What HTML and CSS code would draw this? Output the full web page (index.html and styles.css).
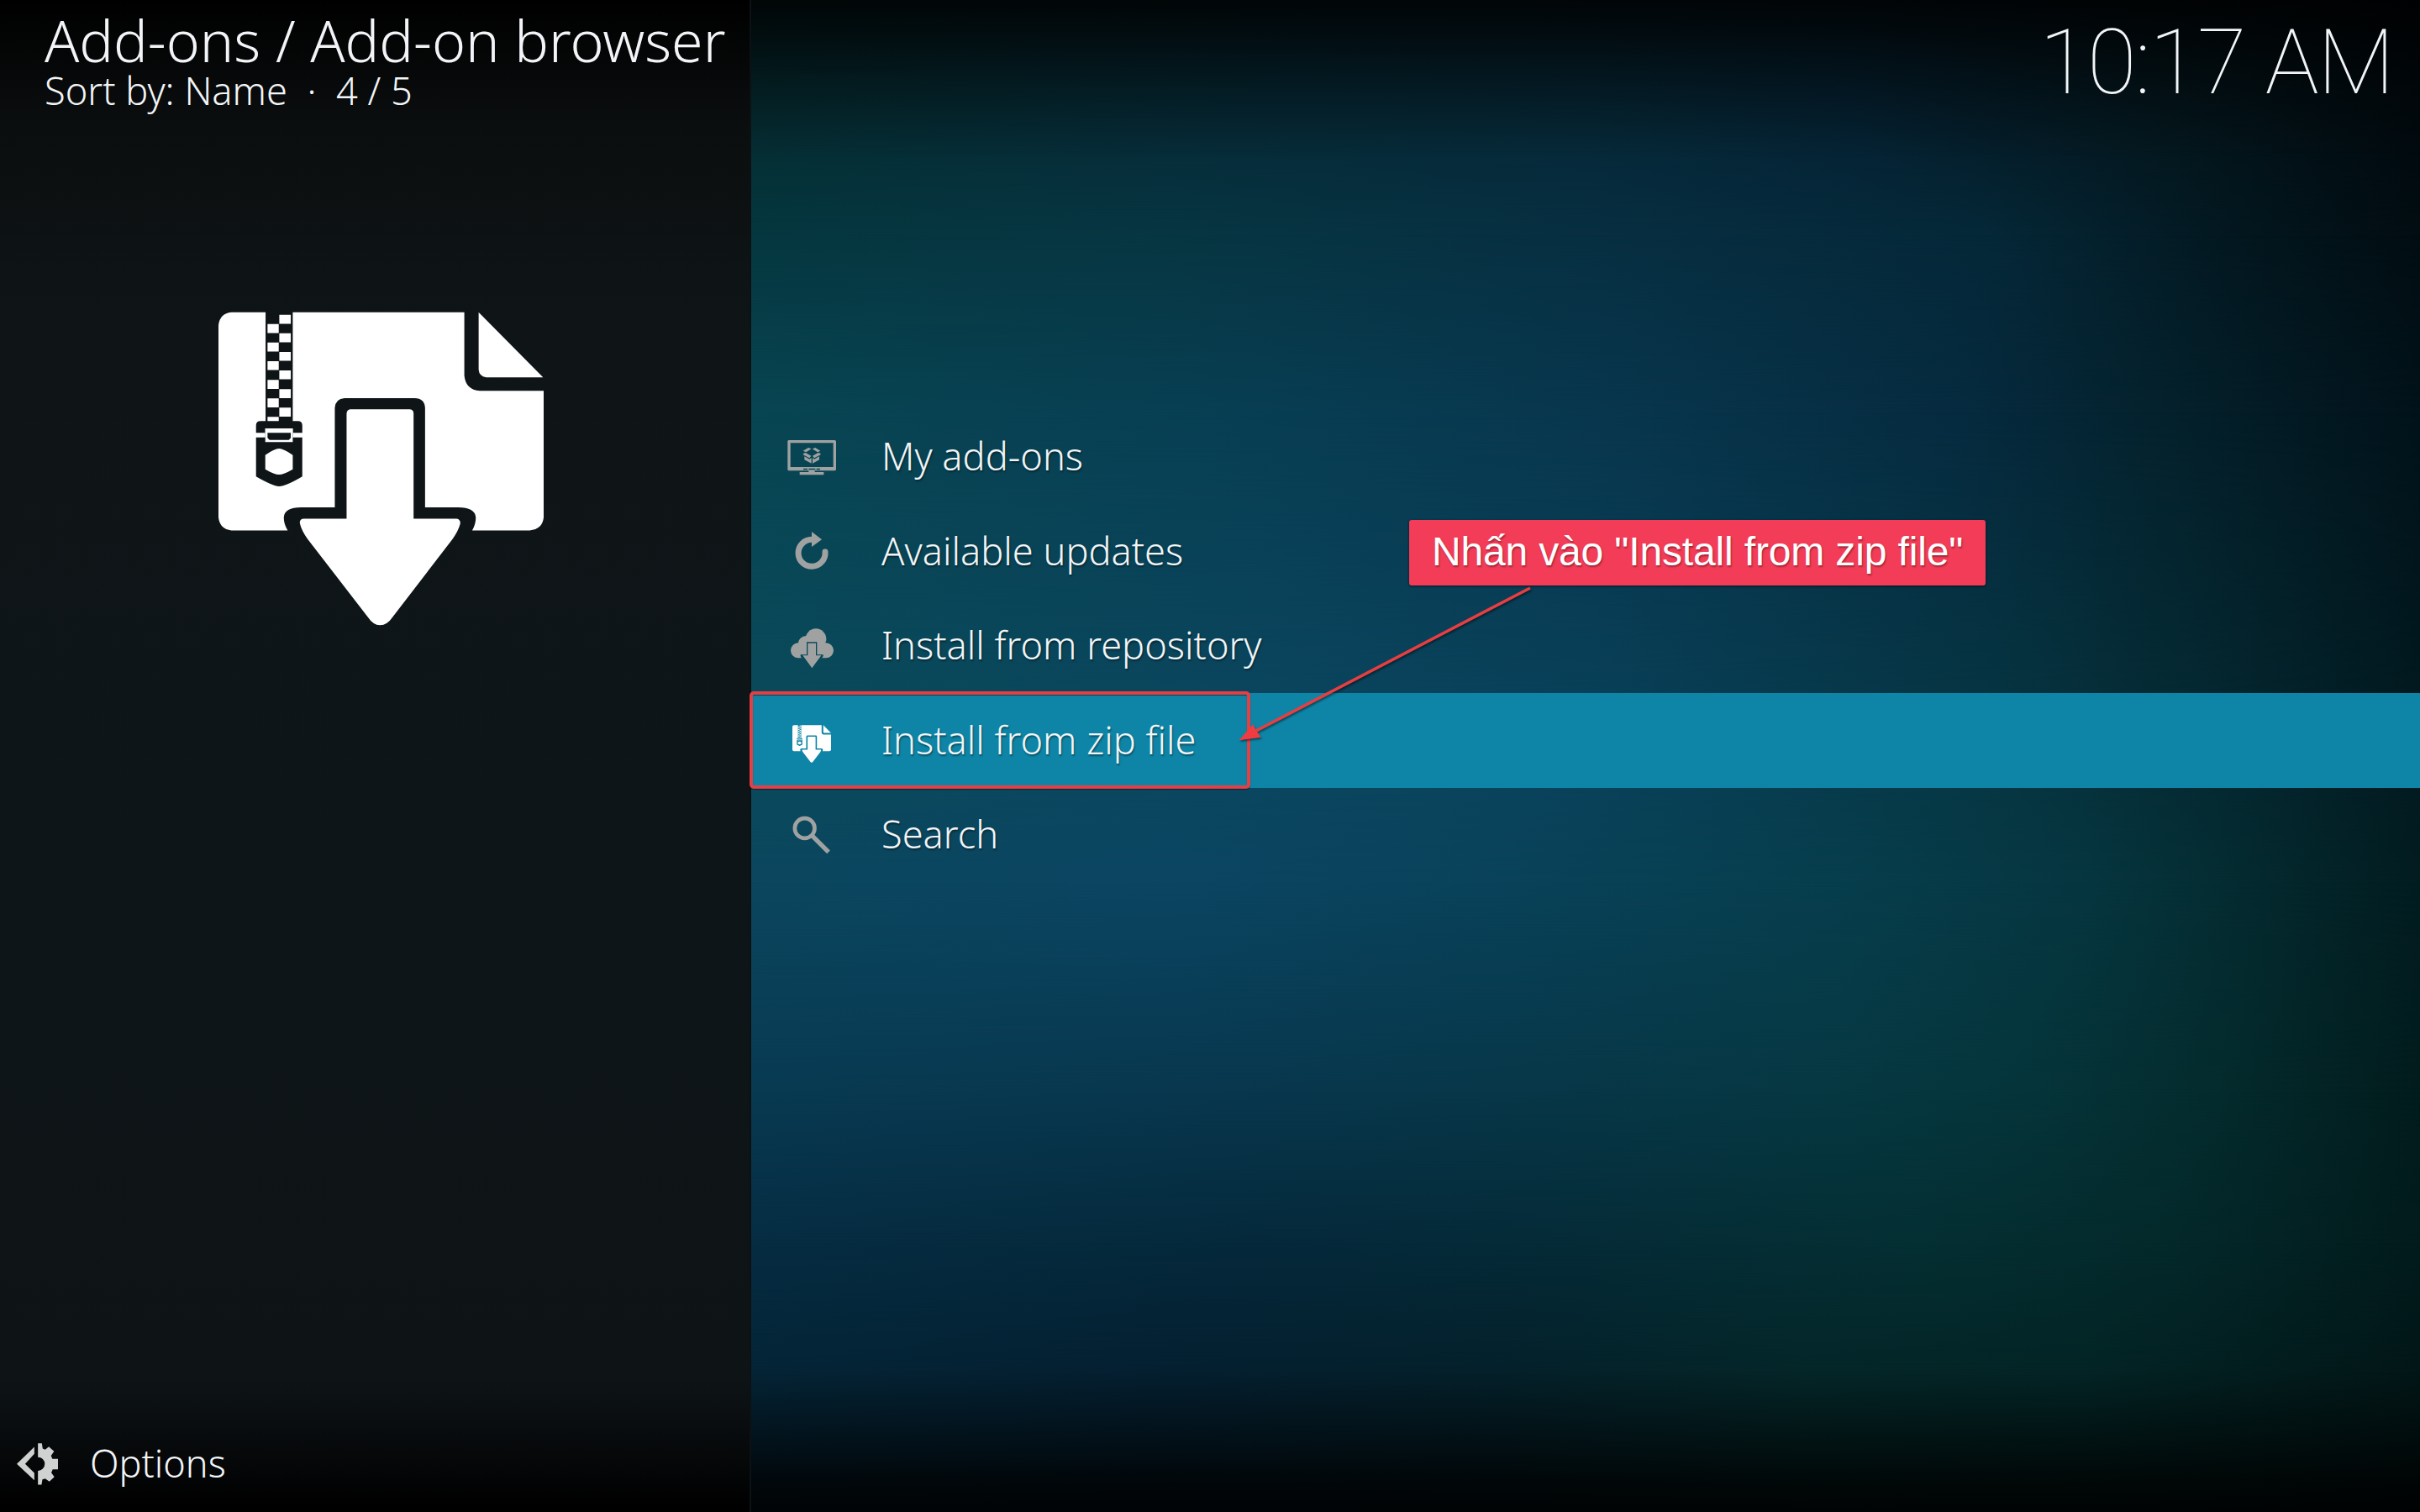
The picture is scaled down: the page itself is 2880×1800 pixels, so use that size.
FILE: index.html
```
<!DOCTYPE html>
<html lang="en">
<head>
    <meta charset="UTF-8">
    <meta name="viewport" content="width=device-width, initial-scale=1.0">
    <title>Add-on browser</title>
    <link rel="stylesheet" href="styles.css">
</head>
<body>
    <svg class="defs" width="0" height="0">
        <symbol id="zip-icon" viewBox="90 62 1160 1120">
            <path fill-rule="evenodd" d="M136 64H258V452H240Q224 452 224 468V494H257V478H355V494H389V468Q389 452 373 452H355V64H967V290Q972 340 1022 344H1250V796Q1246 838 1200 842H995Q1008 820 1008 796Q1005 760 945 760H827V405Q825 370 790 370H540Q507 372 505 405V760H385Q325 760 323 796Q323 820 337 842H136Q95 838 90 796V110Q95 68 136 64Z M224 510H257V494H355V510H389V650Q330 685 306 685Q285 685 224 650Z"/>
            <path fill-rule="evenodd" d="M257 478H355V527H257Z M272 485L265 492V512L272 519H341L348 512V492L341 485Z"/>
            <path d="M257 573Q290 550 306 550Q322 550 355 573V624Q322 643 306 643Q290 643 257 624Z"/>
            <path d="M265 106h40v32h-40zM265 172h40v32h-40zM265 238h40v32h-40zM265 305h40v32h-40zM265 371h40v32h-40zM265 437h40v15h-40zM307 73h41v32h-41zM307 139h41v32h-41zM307 205h41v32h-41zM307 271h41v32h-41zM307 338h41v32h-41zM307 404h41v32h-41z"/>
            <path d="M1018 64L1248 296H1045Q1020 292 1018 268Z"/>
            <path d="M547 800V425Q548 412 560 410H773Q786 412 786 425V800H940Q955 803 952 820Q945 845 925 873L712 1150Q692 1180 666 1180Q642 1180 622 1150L408 873Q385 840 380 815Q380 800 395 800Z"/>
        </symbol>
    </svg>

    <div class="screen">
        <div class="backdrop">
            <div class="band band-1"></div>
            <div class="band band-2"></div>
            <div class="band band-3"></div>
            <div class="band band-4"></div>
            <div class="band band-5"></div>
            <div class="band band-6"></div>
            <div class="band band-7"></div>
            <div class="band band-8"></div>
            <div class="band shade"></div>
        </div>

        <aside class="sidebar">
            <header class="heading">
                <h1>Add-ons / Add-on browser</h1>
                <p>Sort by: Name &nbsp;·&nbsp; 4 / 5</p>
            </header>
            <svg class="poster"><use href="#zip-icon"/></svg>
            <footer class="options">
                <svg class="options-icon" viewBox="62 84 148 150">
                    <path d="M125 97V122L92 158L125 191V217L62 158Z"/>
                    <path d="M138 84H152L155 103L164 107L177 96L196 113L185 129L190 140H210V178H191L186 190L197 205L179 222L164 211L154 214L151 233H138V183A24.500 24.500 0 0 0 138 134Z"/>
                </svg>
                <span>Options</span>
            </footer>
        </aside>

        <main class="content">
            <div class="clock">10:17 AM</div>
            <ul class="menu">
                <li class="item">
                    <svg class="icon" viewBox="-126 -126 252 252">
                        <path fill-rule="evenodd" d="M-83 -60H83L87 -57V46L83 49H11V54H43V64H-43V54H-11V49H-83L-86 46V-57ZM-76 -50V36H77V-50ZM-30 41V46H-15V41ZM-11 41V46H13V41ZM17 41V46H30V41Z"/>
                        <path d="M-31 -22L-12 -33L-1 -29L-20 -17ZM31 -22L13 -33L2 -29L21 -17ZM-29 -13L-22 -15L-2 -4L-8 4L-31 -8ZM31 -13L23 -15L3 -4L9 4L32 -8ZM-26 -2L-8 8L-1 3V23L-26 10ZM27 -2L9 8L3 3V23L27 10Z"/>
                    </svg>
                    <span>My add-ons</span>
                </li>
                <li class="item">
                    <svg class="icon" viewBox="-126 -126 252 252">
                        <path class="line" stroke-width="21" stroke-linecap="round" d="M48 3A48 48 0 1 1 0 -41"/>
                        <path d="M0 -69L36 -41L0 -15Z"/>
                    </svg>
                    <span>Available updates</span>
                </li>
                <li class="item">
                    <svg class="icon" viewBox="-126 -126 252 252">
                        <mask id="cloud-cut">
                            <rect x="-126" y="-126" width="252" height="252" fill="#fff"/>
                            <path fill="#000" d="M-18 -14H19V31H41V36L36 44H-36L-40 36V31H-18Z"/>
                        </mask>
                        <g mask="url(#cloud-cut)">
                            <circle cx="15" cy="-25" r="37"/>
                            <circle cx="-20" cy="-8" r="28"/>
                            <circle cx="-48" cy="16" r="27"/>
                            <circle cx="51" cy="16" r="27"/>
                            <path d="M-48 -5H50V43H-48Z"/>
                        </g>
                        <path d="M-14 -10H15V34H34L1 79L-32 34H-14Z"/>
                    </svg>
                    <span>Install from repository</span>
                </li>
                <li class="item focused">
                    <svg class="icon icon-zip"><use href="#zip-icon"/></svg>
                    <span>Install from zip file</span>
                </li>
                <li class="item">
                    <svg class="icon" viewBox="-126 -126 252 252">
                        <circle class="line" cx="-25" cy="-24" r="35.500" stroke-width="14"/>
                        <path class="line" stroke-width="16" d="M0 1L60 61"/>
                    </svg>
                    <span>Search</span>
                </li>
            </ul>
        </main>

        <!-- Annotation on top of the screen -->
        <div class="mark"></div>
        <svg class="arrow" viewBox="0 0 360 200">
            <path class="arrow-line" d="M350 9L22 180"/>
            <path class="arrow-head" d="M6 189L20 173L23 179L28 186Z"/>
        </svg>
        <div class="callout">Nhấn vào "Install from zip file"</div>
    </div>
</body>
</html>
```
FILE: styles.css
```
* {
    box-sizing: border-box;
}
body {
    margin: 0;
    background-color: #000;
    font-family: "Noto Sans", sans-serif;
    font-weight: 300;
    color: #f2f5f7;
}
h1, p, ul {
    margin: 0;
    padding: 0;
    font-weight: 300;
}
.defs {
    position: absolute;
}
.screen {
    position: relative;
    display: grid;
    grid-template-columns: 894px 1fr;
    width: 2880px;
    height: 1800px;
    overflow: hidden;
}

/* Backdrop: horizontal gradients faded into each other from top to bottom */
.backdrop, .band {
    position: absolute;
    inset: 0;
}
.backdrop {
    left: 894px;
}
.band-1 {
    background: linear-gradient(90deg, #052f35, #062d3a 25%, #062a3a 50%, #052436 66%, #04181f 85%, #010a0f);
}
.band-2 {
    background: linear-gradient(90deg, #05373f, #073642 25%, #072f42 50%, #052838 74%, #03161e 90%, #020d12);
    mask-image: linear-gradient(transparent 180px, #000 280px);
}
.band-3 {
    background: linear-gradient(90deg, #084552, #083e53 30%, #08364d 52%, #062b40 72%, #04212c 85%, #02121a);
    mask-image: linear-gradient(transparent 280px, #000 490px);
}
.band-4 {
    background: linear-gradient(90deg, #0a4b5c, #0b4760 30%, #09425b 50%, #063642 75%, #052b34 86%, #021a20);
    mask-image: linear-gradient(transparent 490px, #000 900px);
}
.band-5 {
    background: linear-gradient(90deg, #0b465e, #0b4562 25%, #09425a 45%, #073e4d 65%, #063640 80%, #042a2f 90%, #021c20);
    mask-image: linear-gradient(transparent 900px, #000 1050px);
}
.band-6 {
    background: linear-gradient(90deg, #083a52, #08374e 28%, #073747 50%, #063842 65%, #05353b 76%, #042b2d 88%, #021c1d);
    mask-image: linear-gradient(transparent 1050px, #000 1300px);
}
.band-7 {
    background: linear-gradient(90deg, #062c42, #05293b 30%, #052a38 45%, #052d36 57%, #042f33 70%, #04292b 85%, #021b1c);
    mask-image: linear-gradient(transparent 1300px, #000 1480px);
}
.band-8 {
    background: linear-gradient(90deg, #042436, #041f30 25%, #04202a 45%, #042628 63%, #032425 80%, #021617);
    mask-image: linear-gradient(transparent 1480px, #000 1640px);
}
.shade {
    background: linear-gradient(rgba(0, 0, 0, 0.88), rgba(0, 0, 0, 0.72) 40px, rgba(0, 0, 0, 0.4) 105px, transparent 190px, transparent 1630px, rgba(0, 0, 0, 0.5) 1715px, rgba(0, 0, 0, 0.8) 1765px, rgba(0, 0, 0, 0.9));
}

.sidebar {
    position: relative;
    display: flex;
    flex-direction: column;
    justify-content: space-between;
    background: linear-gradient(#000, #0b0e0f 150px, #0f1517 400px, #0e1518 1000px, #0e1416 1640px, #080b0d 1710px, #000 1795px);
    border-right: 2px solid #0c1113;
    padding: 7px 0 23px;
}
.heading {
    height: 150px;
    padding-left: 53px;
    white-space: nowrap;
}
.heading h1 {
    font-size: 68px;
    line-height: 82px;
}
.heading p {
    font-size: 45.200px;
    line-height: 38px;
}
.poster {
    width: 387px;
    height: 374px;
    margin: 214px 0 auto 260px;
    fill: #fff;
}
.options {
    display: flex;
    align-items: center;
    height: 72px;
    padding-left: 20px;
    font-size: 45px;
}
.options span {
    margin-left: 38px;
}
.options-icon {
    width: 49px;
    height: 50px;
    margin-top: 4px;
    fill: #d0d1d1;
}

.content {
    position: relative;
    display: flex;
    flex-direction: column;
}
.clock {
    height: 487.500px;
    padding: 12px 32px 0 0;
    font-family: Roboto, sans-serif;
    font-size: 107px;
    font-weight: 100;
    letter-spacing: -1.700px;
    text-align: right;
}
.menu {
    list-style: none;
}
.item {
    display: flex;
    align-items: center;
    height: 112.500px;
    font-size: 45.200px;
    text-shadow: 1px 2px 2px rgba(0, 0, 0, 0.4);
}
.item span {
    margin-top: -2px;
}
.item.focused {
    background-color: #0e85a6;
}
.icon {
    width: 84px;
    height: 84px;
    margin: 0 41px 0 30px;
    fill: #a0a2a2;
}
.icon .line {
    fill: none;
    stroke: #a0a2a2;
}
.icon-zip {
    width: 46px;
    height: 45px;
    margin: 8px 60px 0 49px;
    fill: #fff;
}

.mark {
    position: absolute;
    left: 892px;
    top: 823px;
    width: 596px;
    height: 116px;
    border: 4px solid #e33f45;
    border-radius: 5px;
    box-shadow: 0 1px 1px rgba(0, 0, 0, 0.5), inset 0 1px 1px rgba(0, 0, 0, 0.5);
}
.arrow {
    position: absolute;
    left: 1471px;
    top: 691px;
    width: 360px;
    height: 200px;
    filter: drop-shadow(1px 2px 1px rgba(0, 0, 0, 0.45));
}
.arrow-line {
    fill: none;
    stroke: #e83e42;
    stroke-width: 3.500;
}
.arrow-head {
    fill: #f03c40;
    stroke: #f03c40;
    stroke-width: 2;
}
.callout {
    position: absolute;
    left: 1677px;
    top: 619px;
    width: 686px;
    height: 78px;
    border-radius: 3px;
    background-color: #f33c57;
    box-shadow: 0 1px 3px rgba(0, 0, 0, 0.6);
    color: #fff;
    font-family: "Liberation Sans", sans-serif;
    font-size: 48px;
    font-weight: 400;
    letter-spacing: -0.150px;
    line-height: 76px;
    text-align: center;
    text-shadow: 1px 2px 2px rgba(0, 0, 0, 0.35);
    white-space: nowrap;
}
```
